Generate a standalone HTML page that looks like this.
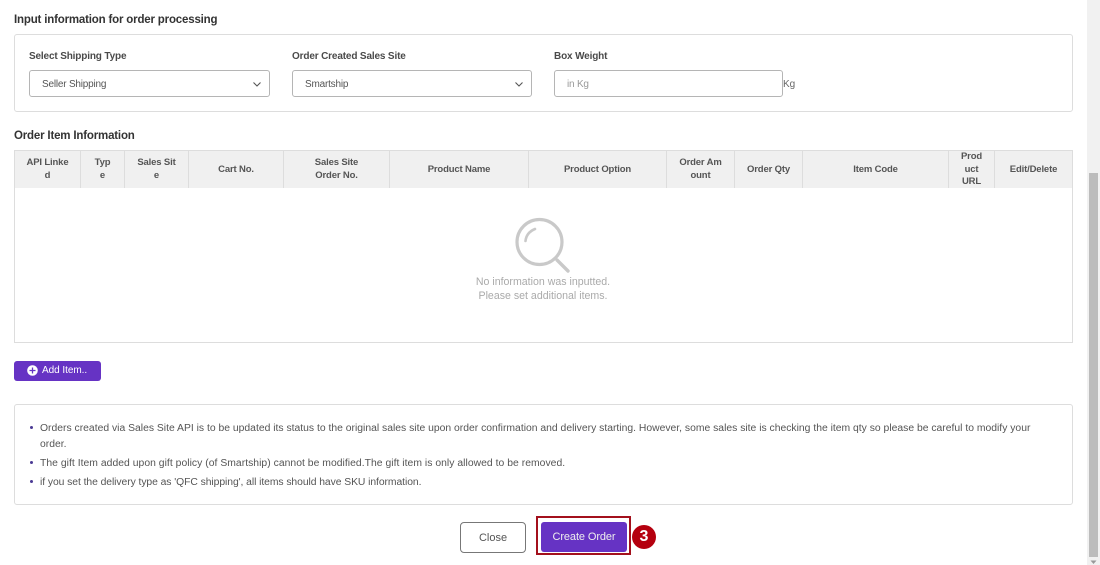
<!DOCTYPE html>
<html><head><meta charset="utf-8">
<style>
html,body{margin:0;padding:0;background:#fff}
body{width:1100px;height:565px;position:relative;overflow:hidden;font-family:"Liberation Sans",sans-serif;color:#444}
.a{position:absolute;white-space:nowrap}
.box{position:absolute;box-sizing:border-box;border:1px solid #ddd;border-radius:3px;background:#fff}
.h{font-size:11.5px;font-weight:bold;color:#333;letter-spacing:-.18px}
.l{font-size:10px;font-weight:bold;color:#4a4a4a;letter-spacing:-.15px}
.sel{position:absolute;box-sizing:border-box;border:1px solid #b5b5b5;border-radius:3px;height:27px;top:70px;background:#fff}
.sel span{position:absolute;left:12px;top:7.500px;font-size:10px;color:#555;letter-spacing:-.2px}
.sel svg{position:absolute;right:7px;top:10px}
.th{position:absolute;top:151px;height:37px;padding-top:1px;box-sizing:border-box;border-right:1px solid #ddd;background:#f0f0f0;display:flex;align-items:center;justify-content:center;text-align:center;font-size:9.5px;font-weight:bold;color:#555;line-height:12.7px;letter-spacing:-.15px}
.n{font-size:10.36px;color:#555}
.dot{position:absolute;width:3px;height:3px;border-radius:50%;background:#4a3a94;left:30px}
</style></head><body>

<div class="a h" style="left:14px;top:14px">Input information for order processing</div>
<div class="box" style="left:14px;top:34px;width:1059px;height:78px"></div>
<div class="a l" style="left:29px;top:51px">Select Shipping Type</div>
<div class="a l" style="left:292px;top:51px">Order Created Sales Site</div>
<div class="a l" style="left:554px;top:51px">Box Weight</div>
<div class="sel" style="left:29px;width:241px"><span>Seller Shipping</span><svg width="10" height="7" viewBox="0 0 10 7"><path d="M1.500 1.500 5 5 8.500 1.500" fill="none" stroke="#555" stroke-width="1.100"/></svg></div>
<div class="sel" style="left:292px;width:240px"><span>Smartship</span><svg width="10" height="7" viewBox="0 0 10 7"><path d="M1.500 1.500 5 5 8.500 1.500" fill="none" stroke="#555" stroke-width="1.100"/></svg></div>
<div class="sel" style="left:554px;width:229px"><span style="color:#999">in Kg</span></div>
<div class="a" style="left:783px;top:79px;font-size:10px;color:#666">Kg</div>

<div class="a h" style="left:14px;top:130px">Order Item Information</div>
<div class="a" style="left:14px;top:150px;width:1059px;height:193px;box-sizing:border-box;border:1px solid #ddd;background:#fff"></div>
<div class="th" style="left:15px;width:66px">API Linke<br>d</div>
<div class="th" style="left:81px;width:44px">Typ<br>e</div>
<div class="th" style="left:125px;width:64px">Sales Sit<br>e</div>
<div class="th" style="left:189px;width:95px">Cart No.</div>
<div class="th" style="left:284px;width:106px">Sales Site<br>Order No.</div>
<div class="th" style="left:390px;width:139px">Product Name</div>
<div class="th" style="left:529px;width:138px">Product Option</div>
<div class="th" style="left:667px;width:68px">Order Am<br>ount</div>
<div class="th" style="left:735px;width:68px">Order Qty</div>
<div class="th" style="left:803px;width:146px">Item Code</div>
<div class="th" style="left:949px;width:46px">Prod<br>uct<br>URL</div>
<div class="th" style="left:995px;width:77px;border-right:0">Edit/Delete</div>

<svg class="a" style="left:510px;top:213px" width="66" height="62" viewBox="0 0 66 62">
<circle cx="29.500" cy="29" r="22.500" fill="none" stroke="#c9c9c9" stroke-width="3.200"/>
<path d="M47 47 58 58" fill="none" stroke="#c9c9c9" stroke-width="3.400" stroke-linecap="round"/>
<path d="M15.500 28C16 23 19 18.500 25 16" fill="none" stroke="#c9c9c9" stroke-width="2.600" stroke-linecap="round"/>
</svg>
<div class="a" style="left:443px;width:200px;top:275px;text-align:center;font-size:10.600px;line-height:14px;color:#aaa">No information was inputted.<br>Please set additional items.</div>

<div class="a" style="left:14px;top:361px;width:87px;height:20px;border-radius:3px;background:#6633c4"></div>
<svg class="a" style="left:27px;top:365px" width="11" height="11" viewBox="0 0 11 11"><circle cx="5.500" cy="5.500" r="5.300" fill="#fff"/><path d="M5.500 2.500v6M2.500 5.500h6" stroke="#6633c4" stroke-width="1.300"/></svg>
<div class="a" style="left:42px;top:365px;font-size:10px;color:#fff;letter-spacing:-.05px">Add Item..</div>

<div class="box" style="left:14px;top:404px;width:1059px;height:101px"></div>
<div class="dot" style="left:30px;top:426px"></div>
<div class="a n" style="left:40px;top:423px">Orders created via Sales Site API is to be updated its status to the original sales site upon order confirmation and delivery starting. However, some sales site is checking the item qty so please be careful to modify your</div>
<div class="a n" style="left:40px;top:439px">order.</div>
<div class="dot" style="left:30px;top:461px"></div>
<div class="a n" style="left:40px;top:458px;letter-spacing:.03px">The gift Item added upon gift policy (of Smartship) cannot be modified.The gift item is only allowed to be removed.</div>
<div class="dot" style="left:30px;top:480px"></div>
<div class="a n" style="left:40px;top:477px;letter-spacing:-.07px">if you set the delivery type as 'QFC shipping', all items should have SKU information.</div>

<div class="a" style="left:460px;top:522px;width:66px;height:31px;box-sizing:border-box;border:1px solid #777;border-radius:4px;background:#fff;text-align:center;line-height:30px;font-size:11px;color:#555">Close</div>
<div class="a" style="left:536px;top:516px;width:95px;height:39px;box-sizing:border-box;border:2px solid #a3101c"></div>
<div class="a" style="left:541px;top:522px;width:86px;height:30px;border-radius:3px;background:#6633c4;color:#eee;text-align:center;line-height:31px;font-size:11px;letter-spacing:-.1px">Create Order</div>
<div class="a" style="left:632px;top:525px;width:24px;height:24px;border-radius:50%;background:#b5000f;color:#fff;text-align:center;line-height:24px;font-size:16px;font-weight:bold">3</div>

<div class="a" style="left:1087px;top:0;width:13px;height:565px;background:#f1f1f1"></div>
<div class="a" style="left:1089px;top:173px;width:9px;height:384px;background:#bcbcbc"></div>
<svg class="a" style="left:1089px;top:559px" width="9" height="6" viewBox="0 0 9 6"><path d="M1.500 1.500h6L4.500 5z" fill="#999"/></svg>
</body></html>
